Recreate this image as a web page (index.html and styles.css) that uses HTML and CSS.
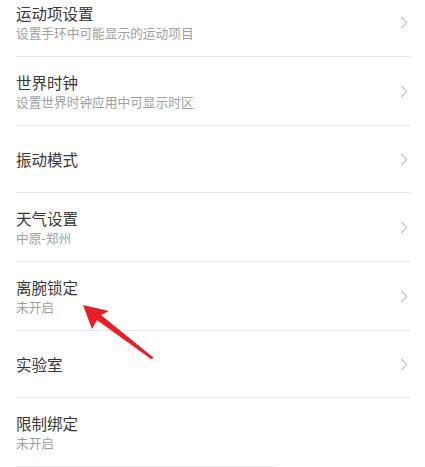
FILE: index.html
```html
<!DOCTYPE html>
<html lang="zh-CN">
<head>
  <meta charset="UTF-8">
  <meta name="viewport" content="width=device-width, initial-scale=1.0">
  <title>设置</title>
  <link rel="stylesheet" href="styles.css">
</head>
<body>
  <div class="settings">
    <div class="row">
      <div class="text">
        <div class="title">运动项设置</div>
        <div class="sub">设置手环中可能显示的运动项目</div>
      </div>
      <svg class="chev" viewBox="0 0 8 14"><polyline points="1,1 7,7 1,13"/></svg>
    </div>
    <div class="row">
      <div class="text">
        <div class="title">世界时钟</div>
        <div class="sub">设置世界时钟应用中可显示时区</div>
      </div>
      <svg class="chev" viewBox="0 0 8 14"><polyline points="1,1 7,7 1,13"/></svg>
    </div>
    <div class="row single">
      <div class="text">
        <div class="title">振动模式</div>
      </div>
      <svg class="chev" viewBox="0 0 8 14"><polyline points="1,1 7,7 1,13"/></svg>
    </div>
    <div class="row">
      <div class="text">
        <div class="title">天气设置</div>
        <div class="sub">中原-郑州</div>
      </div>
      <svg class="chev" viewBox="0 0 8 14"><polyline points="1,1 7,7 1,13"/></svg>
    </div>
    <div class="row">
      <div class="text">
        <div class="title">离腕锁定</div>
        <div class="sub">未开启</div>
      </div>
      <svg class="chev" viewBox="0 0 8 14"><polyline points="1,1 7,7 1,13"/></svg>
    </div>
    <div class="row single">
      <div class="text">
        <div class="title">实验室</div>
      </div>
      <svg class="chev" viewBox="0 0 8 14"><polyline points="1,1 7,7 1,13"/></svg>
    </div>
    <div class="row last">
      <div class="text">
        <div class="title">限制绑定</div>
        <div class="sub">未开启</div>
      </div>
    </div>
    <div class="tail-line"></div>
  </div>

  <!-- annotation arrow pointing at 离腕锁定 -->
  <svg class="arrow" width="425" height="467" viewBox="0 0 425 467">
    <polygon points="83,305 109,311 101,315 154,358 151,359 97,320 92,329"/>
  </svg>
</body>
</html>
```

FILE: styles.css
```css
body { margin: 0; background: #fff; font-family: "Noto Sans CJK SC", "Noto Sans", sans-serif; overflow: hidden; }
.settings { margin-top: -12px; padding: 0 15px 0 16px; }
.row { display: flex; align-items: center; justify-content: space-between; padding: 14px 0; border-bottom: 1px solid #e6e6e6; }
.row.single { padding: 22px 0; }
.row.last { border-bottom: none; }
.tail-line { width: 260px; height: 1px; background: #e6e6e6; }
.title { font-size: 15.5px; line-height: 22px; color: #383838; }
.sub { font-size: 12.7px; line-height: 18px; color: #a0a0a0; }
.chev { width: 8px; height: 13px; margin-right: 2px; fill: none; stroke: #b8b8b8; stroke-width: 1.1; }
.arrow { position: absolute; left: 0; top: 0; }
.arrow polygon { fill: #ec1c24; }
```
